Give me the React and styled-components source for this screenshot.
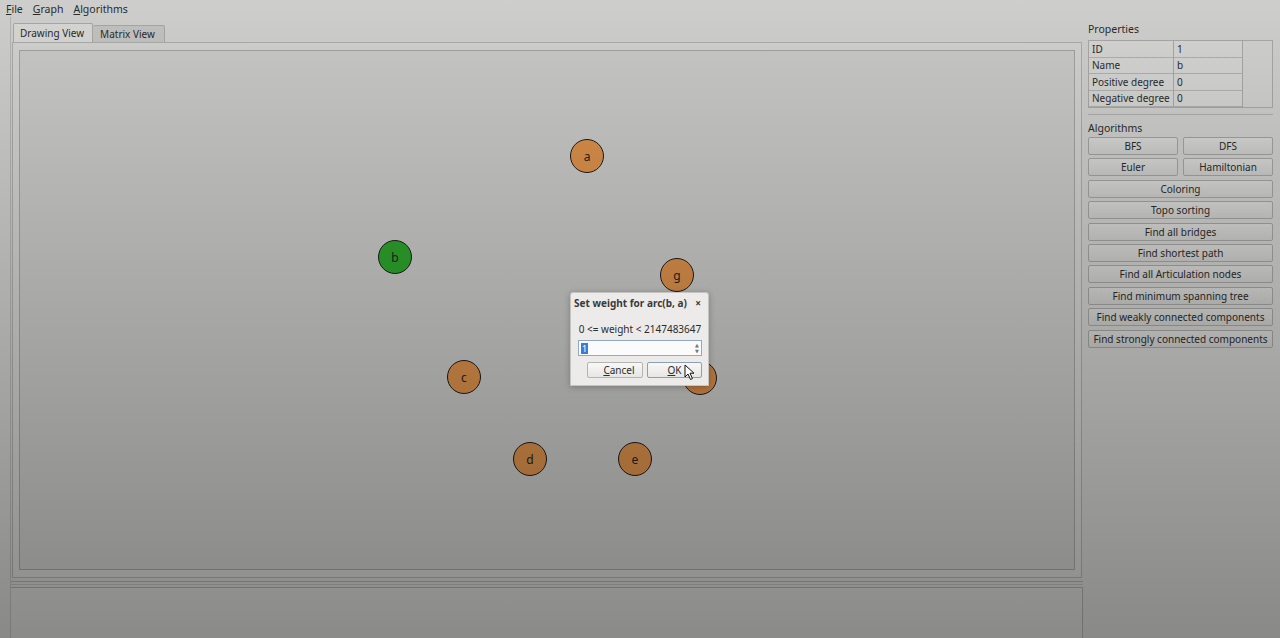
import React from "react";
import styled, { createGlobalStyle } from "styled-components";

const GlobalStyle = createGlobalStyle`
  html, body {
    margin: 0;
    padding: 0;
  }
  body {
    font-family: "Noto Sans", "DejaVu Sans", sans-serif;
    font-size: 10px;
    color: #2b2b2b;
  }
`;

const Window = styled.div`
  position: relative;
  width: 1280px;
  height: 638px;
  overflow: hidden;
  background: #d0d0ce;
  display: flex;
  flex-direction: column;

  &::after {
    content: "";
    position: absolute;
    inset: 0;
    pointer-events: none;
    z-index: 5;
    background: linear-gradient(to bottom, rgba(0, 0, 0, 0.01), rgba(0, 0, 0, 0.34));
  }
`;

const MenuBar = styled.div`
  height: 17px;
  display: flex;
  align-items: center;
  gap: 10px;
  padding-left: 6px;
  font-size: 10.5px;
`;

const MenuItem = styled.span`
  u {
    text-decoration-thickness: 1px;
  }
`;

const Body = styled.div`
  flex: 1;
  display: flex;
  min-height: 0;
`;

const LeftColumn = styled.div`
  width: 1073px;
  margin-left: 10px;
  padding-top: 6px;
  display: flex;
  flex-direction: column;
  box-sizing: border-box;
  border-left: 1px solid #b6b6b4;
`;

const TabBar = styled.div`
  display: flex;
  align-items: flex-end;
  height: 19px;
  margin-left: 2px;
`;

const Tab = styled.div`
  height: ${(props) => (props.active ? 19 : 17)}px;
  padding: 0 ${(props) => (props.active ? 8 : 9)}px 0 ${(props) => (props.active ? 6 : 7)}px;
  display: flex;
  align-items: center;
  box-sizing: border-box;
  font-size: 10px;
  background: ${(props) => (props.active ? "#d8d8d6" : "#c3c3c1")};
  border: 1px solid #a8a8a6;
  border-bottom: none;
  border-left: ${(props) => (props.active ? "1px solid #a8a8a6" : "none")};
  border-radius: 2px 2px 0 0;
`;

const Pane = styled.div`
  width: 1070px;
  height: 536px;
  margin-left: 1px;
  padding: 7px 6px 7px 6px;
  box-sizing: border-box;
  border: 1px solid #acacaa;
  background: #d3d3d1;
  display: flex;
`;

const Canvas = styled.div`
  position: relative;
  flex: 1;
  border: 1px solid #a3a3a1;
  background: #cacac8;
`;

const Splitter = styled.div`
  height: 10px;
  box-sizing: border-box;
  border-bottom: 1px solid #a6a6a4;
  display: flex;
  align-items: center;

  &::before {
    content: "";
    flex: 1;
    height: 2px;
    border-top: 1px solid #a9a9a7;
    border-bottom: 1px solid #b8b8b6;
  }
`;

const BottomPanel = styled.div`
  flex: 1;
  background: #d2d2d0;
  border-right: 1px solid #a9a9a7;
`;

const RightPanel = styled.div`
  flex: 1;
  padding: 3px 7px 0 5px;
  display: flex;
  flex-direction: column;
`;

const SectionLabel = styled.div`
  font-size: 10.5px;
  height: 17px;
  display: flex;
  align-items: center;
`;

const PropTable = styled.div`
  height: 66px;
  margin-top: 3px;
  border: 1px solid #a9a9a7;
  display: grid;
  grid-template-columns: 85px 69px 1fr;
  background: #d2d2d0;
`;

const Cells = styled.div`
  display: grid;
  grid-template-rows: repeat(4, 1fr);
  border-right: 1px solid #a9a9a7;
`;

const Cell = styled.div`
  display: flex;
  align-items: center;
  padding-left: 3px;
  font-size: 10px;
  background: #d6d6d4;
  border-bottom: 1px solid #b2b2b0;
`;

const Divider = styled.div`
  height: 1px;
  background: #b0b0ae;
  margin: 6px 0 4px;
`;

const ButtonGrid = styled.div`
  display: grid;
  grid-template-columns: 1fr 1fr;
  grid-auto-rows: 18px;
  column-gap: 5px;
  row-gap: 3.4px;
  margin-top: 1px;
`;

const AlgoButton = styled.div`
  grid-column: ${(props) => (props.wide ? "1 / 3" : "auto")};
  display: flex;
  align-items: center;
  justify-content: center;
  font-size: 10px;
  border: 1px solid #a4a4a2;
  border-radius: 2px;
  background: linear-gradient(#d9d9d7, #cdcdcb);
  box-sizing: border-box;
`;

const Node = styled.div`
  position: absolute;
  left: ${(props) => props.x - 37}px;
  top: ${(props) => props.y - 68}px;
  width: 34px;
  height: 34px;
  box-sizing: border-box;
  border-radius: 50%;
  border: 1.5px solid #1c1c1c;
  background: ${(props) => (props.green ? "#2da52c" : "#dc914b")};
  display: flex;
  align-items: center;
  justify-content: center;
  font-size: 12px;
  color: #222;
`;

const Dialog = styled.div`
  position: absolute;
  left: 570px;
  top: 292px;
  width: 139px;
  height: 94px;
  z-index: 10;
  background: #ecebea;
  border: 1px solid #c4c4c2;
  border-radius: 3px 3px 0 0;
  box-shadow: 0 1px 6px rgba(0, 0, 0, 0.25);
  box-sizing: border-box;
  display: flex;
  flex-direction: column;
`;

const DialogTitle = styled.div`
  height: 20px;
  display: flex;
  align-items: center;
  justify-content: space-between;
  padding: 0 7px 0 3px;
  font-size: 10px;
  font-weight: bold;
  color: #3a3a3a;
`;

const DialogBody = styled.div`
  flex: 1;
  padding: 9px 6px 0 7px;
  display: flex;
  flex-direction: column;
`;

const DialogLabel = styled.div`
  text-align: center;
  font-size: 10px;
  height: 14px;
  line-height: 14px;
`;

const SpinBox = styled.div`
  margin-top: 4px;
  height: 16px;
  box-sizing: border-box;
  border: 1px solid #8fa9c8;
  background: #fbfbfb;
  display: flex;
  align-items: center;
  padding-left: 2px;
`;

const Selected = styled.span`
  background: #3b7ad6;
  color: #fff;
  font-size: 9px;
  line-height: 11px;
  padding: 0 1px;
`;

const SpinArrows = styled.div`
  margin-left: auto;
  width: 8px;
  height: 100%;
  display: flex;
  flex-direction: column;
  align-items: center;
  justify-content: center;
  font-size: 5px;
  line-height: 6px;
  color: #777;
`;

const DialogButtons = styled.div`
  display: flex;
  justify-content: flex-end;
  gap: 4px;
  margin-top: 6px;
`;

const DialogButton = styled.div`
  width: ${(props) => props.w}px;
  height: 16px;
  box-sizing: border-box;
  border: 1px solid ${(props) => (props.focus ? "#8a9fba" : "#b4b4b2")};
  border-radius: 2px;
  background: linear-gradient(#f8f8f7, #e6e6e4);
  display: flex;
  align-items: center;
  justify-content: center;
  padding-left: ${(props) => (props.focus ? 0 : 8)}px;
  font-size: 10px;
  position: relative;
`;

const Cursor = styled.svg`
  position: absolute;
  left: 36px;
  top: 1px;
`;

const nodes = [
  { label: "a", x: 587, y: 156 },
  { label: "b", x: 395, y: 257, green: true },
  { label: "g", x: 677, y: 275 },
  { label: "c", x: 464, y: 377 },
  { label: "f", x: 700, y: 378 },
  { label: "d", x: 530, y: 459 },
  { label: "e", x: 635, y: 459 },
];

const props = [
  ["ID", "1"],
  ["Name", "b"],
  ["Positive degree", "0"],
  ["Negative degree", "0"],
];

const algorithms = [
  "Coloring",
  "Topo sorting",
  "Find all bridges",
  "Find shortest path",
  "Find all Articulation nodes",
  "Find minimum spanning tree",
  "Find weakly connected components",
  "Find strongly connected components",
];

export default function App() {
  return (
    <>
      <GlobalStyle />
      <Window>
        <MenuBar>
          <MenuItem><u>F</u>ile</MenuItem>
          <MenuItem><u>G</u>raph</MenuItem>
          <MenuItem><u>A</u>lgorithms</MenuItem>
        </MenuBar>
        <Body>
          <LeftColumn>
            <TabBar>
              <Tab active>Drawing View</Tab>
              <Tab>Matrix View</Tab>
            </TabBar>
            <Pane>
              <Canvas>
                {nodes.map((n) => (
                  <Node key={n.label} x={n.x} y={n.y} green={n.green}>
                    {n.label}
                  </Node>
                ))}
              </Canvas>
            </Pane>
            <Splitter />
            <BottomPanel />
          </LeftColumn>
          <RightPanel>
            <SectionLabel>Properties</SectionLabel>
            <PropTable>
              <Cells>
                {props.map(([k]) => (
                  <Cell key={k}>{k}</Cell>
                ))}
              </Cells>
              <Cells>
                {props.map(([k, v]) => (
                  <Cell key={k}>{v}</Cell>
                ))}
              </Cells>
              <div />
            </PropTable>
            <Divider />
            <SectionLabel>Algorithms</SectionLabel>
            <ButtonGrid>
              <AlgoButton>BFS</AlgoButton>
              <AlgoButton>DFS</AlgoButton>
              <AlgoButton>Euler</AlgoButton>
              <AlgoButton>Hamiltonian</AlgoButton>
              {algorithms.map((a) => (
                <AlgoButton key={a} wide>{a}</AlgoButton>
              ))}
            </ButtonGrid>
          </RightPanel>
        </Body>
        <Dialog>
          <DialogTitle>
            <span>Set weight for arc(b, a)</span>
            <span>×</span>
          </DialogTitle>
          <DialogBody>
            <DialogLabel>0 &lt;= weight &lt; 2147483647</DialogLabel>
            <SpinBox>
              <Selected>1</Selected>
              <SpinArrows>
                <span>▲</span>
                <span>▼</span>
              </SpinArrows>
            </SpinBox>
            <DialogButtons>
              <DialogButton w={56}><span><u>C</u>ancel</span></DialogButton>
              <DialogButton w={55} focus>
                <span><u>O</u>K</span>
                <Cursor width="12" height="17" viewBox="0 0 12 17">
                  <path d="M1 1 L1 13 L4 10 L6.5 15.5 L8.5 14.6 L6 9.2 L10 9.2 Z" fill="#fff" stroke="#111" strokeWidth="1" strokeLinejoin="round" />
                </Cursor>
              </DialogButton>
            </DialogButtons>
          </DialogBody>
        </Dialog>
      </Window>
    </>
  );
}
